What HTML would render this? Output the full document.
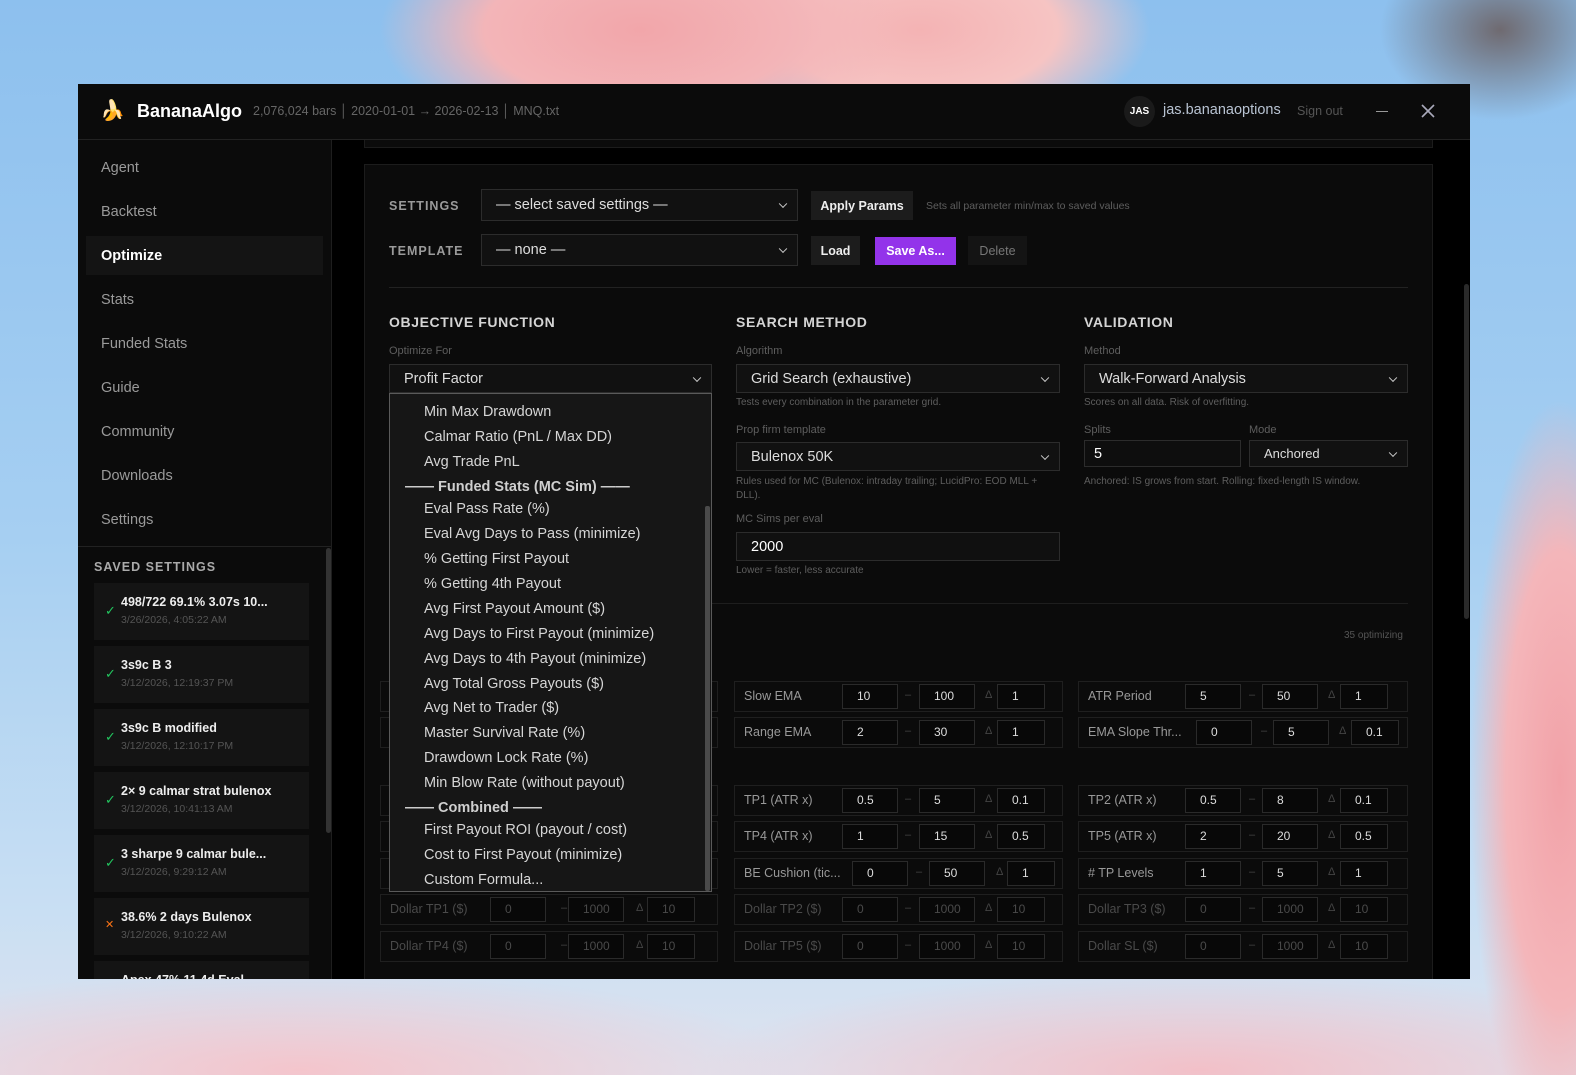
<!DOCTYPE html>
<html><head><meta charset="utf-8"><style>
*{box-sizing:border-box;margin:0;padding:0}
body{width:1576px;height:1075px;overflow:hidden;font-family:"Liberation Sans",sans-serif;position:relative;
background:
radial-gradient(ellipse 260px 120px at 640px 30px,#f2a6aa 0%,#f3b5b8 60%,rgba(243,181,184,0) 100%),
radial-gradient(ellipse 230px 110px at 920px 30px,#f4b3b4 0%,#f6c4c3 60%,rgba(246,196,195,0) 100%),
radial-gradient(ellipse 90px 380px at 1560px 780px,#f2a2a8 0%,#f4b6ba 60%,rgba(244,182,186,0) 100%),
radial-gradient(ellipse 120px 90px at 1500px 30px,#6f6a70 0%,rgba(111,106,112,0) 100%),
radial-gradient(ellipse 500px 100px at 300px 1070px,#f4c5cc 0%,rgba(244,197,204,0) 100%),
radial-gradient(ellipse 500px 100px at 1200px 1070px,#f2c0c8 0%,rgba(242,192,200,0) 100%),
linear-gradient(180deg,#8dc0ee 0%,#a6cff2 50%,#c9dff3 85%,#dfe3ef 100%);}
.win{position:absolute;left:78px;top:84px;width:1392px;height:895px;background:#000;overflow:hidden}
.hdr{position:absolute;left:0;top:0;width:1392px;height:56px;background:#0b0b0b;border-bottom:1px solid #222}
.abs{position:absolute}
.side{position:absolute;left:0;top:56px;width:254px;height:839px;background:#0b0b0b;border-right:1px solid #1e1e1e}
.nav{position:absolute;left:23px;font-size:14.5px;color:#9a9a9a}
.card{position:absolute;left:16px;width:215px;height:57px;background:#141414}
.card .t{position:absolute;left:27px;top:12px;color:#eee;font-size:12.5px;font-weight:bold}
.card .d{position:absolute;left:27px;top:31px;color:#555;font-size:10.5px}
.card .c{position:absolute;left:11px;top:20px;color:#22c55e;font-size:13px}
.lbl{position:absolute;color:#9a9a9a;font-size:12.5px;font-weight:bold;letter-spacing:1px}
.h{position:absolute;color:#d5d5d5;font-size:14px;font-weight:bold;letter-spacing:.6px}
.sm{position:absolute;color:#5e5e5e;font-size:11px}
.sel{position:absolute;background:#111;border:1px solid #2c2c2c;color:#ddd;font-size:14.5px;padding-left:14px;display:flex;align-items:center}
.sel:after{content:"";position:absolute;right:11px;top:50%;width:5px;height:5px;border-right:1.5px solid #ccc;border-bottom:1.5px solid #ccc;transform:translateY(-70%) rotate(45deg)}
.sel.inp:after{display:none}
.btn{position:absolute;font-size:12.5px;font-weight:bold;display:flex;align-items:center;justify-content:center}
.row{position:absolute;height:31px;border:1px solid #1f1f1f}
.row .n{position:absolute;left:9px;top:7px;font-size:12.5px;color:#999;white-space:nowrap}
.row .i{position:absolute;top:2px;height:25px;border:1px solid #2a2a2a;background:#080808;color:#ddd;font-size:12px;padding-left:14px;line-height:23px}
.row .s{position:absolute;top:7px;font-size:11px;color:#444}
.dim .n,.dim .i{color:#4a4a4a}
.dd{position:absolute;left:311px;top:309px;width:323px;height:499px;background:#161616;border:1px solid #5a5a5a;overflow:hidden}
.dd div{position:absolute;left:34px;font-size:14.5px;color:#d6d6d6;white-space:nowrap}
.dd .g{left:15px;font-weight:bold;color:#cfcfcf}
</style></head><body>
<div class="win">
 <div class="hdr">
  <div class="abs" style="left:22px;top:14px;font-size:20px;color:#f6c33a">&#x1F34C;</div>
  <div class="abs" style="left:59px;top:17px;font-size:18px;font-weight:bold;color:#fff">BananaAlgo</div>
  <div class="abs" style="left:175px;top:20px;font-size:12.5px;color:#666">2,076,024 bars │ 2020-01-01 → 2026-02-13 │ MNQ.txt</div>
  <div class="abs" style="left:1046px;top:12px;width:31px;height:31px;border-radius:50%;background:#1a1a1a;color:#fff;font-size:10px;font-weight:bold;text-align:center;line-height:31px">JAS</div>
  <div class="abs" style="left:1085px;top:18px;font-size:14.5px;color:#b8c3d2">jas.bananaoptions</div>
  <div class="abs" style="left:1219px;top:20px;font-size:12.5px;color:#555">Sign out</div>
  <div class="abs" style="left:1298px;top:27px;width:12px;height:1px;background:#999"></div>
  <svg class="abs" style="left:1343px;top:20px" width="14" height="14"><path d="M1 1L13 13M13 1L1 13" stroke="#aab" stroke-width="1.6"/></svg>
 </div>
 <div class="side">
  <div class="nav" style="top:20px">Agent</div>
  <div class="nav" style="top:64px">Backtest</div>
  <div class="abs" style="left:8px;top:96px;width:237px;height:39px;background:#141414"></div>
  <div class="nav" style="top:108px;color:#fff;font-weight:bold">Optimize</div>
  <div class="nav" style="top:152px">Stats</div>
  <div class="nav" style="top:196px">Funded Stats</div>
  <div class="nav" style="top:240px">Guide</div>
  <div class="nav" style="top:284px">Community</div>
  <div class="nav" style="top:328px">Downloads</div>
  <div class="nav" style="top:372px">Settings</div>
  <div class="abs" style="left:0;top:406px;width:253px;height:1px;background:#222"></div>
  <div class="abs" style="left:248px;top:408px;width:5px;height:285px;background:#333;border-radius:3px"></div>
  <div class="lbl" style="left:16px;top:420px;color:#aaa">SAVED SETTINGS</div>
  <div class="card" style="top:443px"><span class="c">✓</span><div class="t">498/722 69.1% 3.07s 10...</div><div class="d">3/26/2026, 4:05:22 AM</div></div>
  <div class="card" style="top:506px"><span class="c">✓</span><div class="t">3s9c B 3</div><div class="d">3/12/2026, 12:19:37 PM</div></div>
  <div class="card" style="top:569px"><span class="c">✓</span><div class="t">3s9c B modified</div><div class="d">3/12/2026, 12:10:17 PM</div></div>
  <div class="card" style="top:632px"><span class="c">✓</span><div class="t">2× 9 calmar strat bulenox</div><div class="d">3/12/2026, 10:41:13 AM</div></div>
  <div class="card" style="top:695px"><span class="c">✓</span><div class="t">3 sharpe 9 calmar bule...</div><div class="d">3/12/2026, 9:29:12 AM</div></div>
  <div class="card" style="top:758px"><span class="c" style="color:#f97316;font-size:11px">✕</span><div class="t">38.6% 2 days Bulenox</div><div class="d">3/12/2026, 9:10:22 AM</div></div>
  <div class="card" style="top:821px"><div class="t">Apex 47% 11.4d Eval</div></div>
 </div>
 <div class="abs" style="left:286px;top:56px;width:1069px;height:8px;background:#0b0b0b;border:1px solid #1c1c1c;border-top:none"></div>
 <div class="abs" style="left:286px;top:80px;width:1069px;height:830px;background:#0b0b0b;border:1px solid #1c1c1c"></div>
 <div class="abs" style="left:1386px;top:200px;width:5px;height:335px;background:#2a2a2a;border-radius:3px"></div>
 <div class="lbl" style="left:311px;top:115px">SETTINGS</div>
 <div class="sel" style="left:403px;top:105px;width:317px;height:32px">— select saved settings —</div>
 <div class="btn" style="left:733px;top:107px;width:102px;height:29px;background:#1c1c1c;color:#eee">Apply Params</div>
 <div class="sm" style="left:848px;top:116px;font-size:10.5px">Sets all parameter min/max to saved values</div>
 <div class="lbl" style="left:311px;top:160px">TEMPLATE</div>
 <div class="sel" style="left:403px;top:150px;width:317px;height:32px">— none —</div>
 <div class="btn" style="left:733px;top:152px;width:49px;height:29px;background:#1c1c1c;color:#eee">Load</div>
 <div class="btn" style="left:797px;top:153px;width:81px;height:28px;background:#9333ea;color:#fff">Save As...</div>
 <div class="btn" style="left:890px;top:152px;width:59px;height:29px;background:#141414;color:#777;font-weight:normal">Delete</div>
 <div class="abs" style="left:311px;top:203px;width:1019px;height:1px;background:#222"></div>

 <div class="h" style="left:311px;top:230px">OBJECTIVE FUNCTION</div>
 <div class="h" style="left:658px;top:230px">SEARCH METHOD</div>
 <div class="h" style="left:1006px;top:230px">VALIDATION</div>
 <div class="sm" style="left:311px;top:261px">Optimize For</div>
 <div class="sel" style="left:311px;top:280px;width:323px;height:29px">Profit Factor</div>
 <div class="sm" style="left:658px;top:261px">Algorithm</div>
 <div class="sel" style="left:658px;top:280px;width:324px;height:29px">Grid Search (exhaustive)</div>
 <div class="sm" style="left:658px;top:313px;font-size:10px">Tests every combination in the parameter grid.</div>
 <div class="sm" style="left:658px;top:340px">Prop firm template</div>
 <div class="sel" style="left:658px;top:358px;width:324px;height:29px">Bulenox 50K</div>
 <div class="sm" style="left:658px;top:391px;font-size:10px;width:324px;line-height:14px">Rules used for MC (Bulenox: intraday trailing; LucidPro: EOD MLL + DLL).</div>
 <div class="sm" style="left:658px;top:429px">MC Sims per eval</div>
 <div class="sel inp" style="left:658px;top:448px;width:324px;height:29px;color:#fff;background:#101010">2000</div>
 <div class="sm" style="left:658px;top:481px;font-size:10px">Lower = faster, less accurate</div>
 <div class="sm" style="left:1006px;top:261px">Method</div>
 <div class="sel" style="left:1006px;top:280px;width:324px;height:29px">Walk-Forward Analysis</div>
 <div class="sm" style="left:1006px;top:313px;font-size:10px">Scores on all data. Risk of overfitting.</div>
 <div class="sm" style="left:1006px;top:340px">Splits</div>
 <div class="sel inp" style="left:1006px;top:356px;width:157px;height:27px;padding-left:9px;color:#fff;background:#0e0e0e">5</div>
 <div class="sm" style="left:1171px;top:340px">Mode</div>
 <div class="sel" style="left:1171px;top:356px;width:159px;height:27px;font-size:13px">Anchored</div>
 <div class="sm" style="left:1006px;top:392px;font-size:10px">Anchored: IS grows from start. Rolling: fixed-length IS window.</div>
 <div class="abs" style="left:311px;top:519px;width:1019px;height:1px;background:#1e1e1e"></div>
 <div class="sm" style="left:1266px;top:546px;font-size:10px;color:#555">35 optimizing</div>

 <div class="row" style="left:302px;top:597px;width:338px"></div>
 <div class="row" style="left:302px;top:633px;width:338px"></div>
 <div class="row" style="left:302px;top:701px;width:338px"></div>
 <div class="row" style="left:302px;top:737px;width:338px"></div>
 <div class="row" style="left:302px;top:774px;width:338px"></div>
 <div class="row dim" style="left:302px;top:810px;width:338px"><div class="n">Dollar TP1 ($)</div><div class="i" style="left:109px;width:56px">0</div><span class="s" style="left:180px">–</span><div class="i" style="left:187px;width:56px">1000</div><span class="s" style="left:255px">Δ</span><div class="i" style="left:266px;width:48px">10</div></div>
 <div class="row dim" style="left:302px;top:847px;width:338px"><div class="n">Dollar TP4 ($)</div><div class="i" style="left:109px;width:56px">0</div><span class="s" style="left:180px">–</span><div class="i" style="left:187px;width:56px">1000</div><span class="s" style="left:255px">Δ</span><div class="i" style="left:266px;width:48px">10</div></div>

 <div class="row" style="left:656px;top:597px;width:329px"><div class="n">Slow EMA</div><div class="i" style="left:107px;width:56px">10</div><span class="s" style="left:170px">–</span><div class="i" style="left:184px;width:56px">100</div><span class="s" style="left:250px">Δ</span><div class="i" style="left:262px;width:48px">1</div></div>
 <div class="row" style="left:656px;top:633px;width:329px"><div class="n">Range EMA</div><div class="i" style="left:107px;width:56px">2</div><span class="s" style="left:170px">–</span><div class="i" style="left:184px;width:56px">30</div><span class="s" style="left:250px">Δ</span><div class="i" style="left:262px;width:48px">1</div></div>
 <div class="row" style="left:656px;top:701px;width:329px"><div class="n">TP1 (ATR x)</div><div class="i" style="left:107px;width:56px">0.5</div><span class="s" style="left:170px">–</span><div class="i" style="left:184px;width:56px">5</div><span class="s" style="left:250px">Δ</span><div class="i" style="left:262px;width:48px">0.1</div></div>
 <div class="row" style="left:656px;top:737px;width:329px"><div class="n">TP4 (ATR x)</div><div class="i" style="left:107px;width:56px">1</div><span class="s" style="left:170px">–</span><div class="i" style="left:184px;width:56px">15</div><span class="s" style="left:250px">Δ</span><div class="i" style="left:262px;width:48px">0.5</div></div>
 <div class="row" style="left:656px;top:774px;width:329px"><div class="n">BE Cushion (tic...</div><div class="i" style="left:117px;width:56px">0</div><span class="s" style="left:181px">–</span><div class="i" style="left:194px;width:56px">50</div><span class="s" style="left:261px">Δ</span><div class="i" style="left:272px;width:48px">1</div></div>
 <div class="row dim" style="left:656px;top:810px;width:329px"><div class="n">Dollar TP2 ($)</div><div class="i" style="left:107px;width:56px">0</div><span class="s" style="left:170px">–</span><div class="i" style="left:184px;width:56px">1000</div><span class="s" style="left:250px">Δ</span><div class="i" style="left:262px;width:48px">10</div></div>
 <div class="row dim" style="left:656px;top:847px;width:329px"><div class="n">Dollar TP5 ($)</div><div class="i" style="left:107px;width:56px">0</div><span class="s" style="left:170px">–</span><div class="i" style="left:184px;width:56px">1000</div><span class="s" style="left:250px">Δ</span><div class="i" style="left:262px;width:48px">10</div></div>

 <div class="row" style="left:1000px;top:597px;width:330px"><div class="n">ATR Period</div><div class="i" style="left:106px;width:56px">5</div><span class="s" style="left:170px">–</span><div class="i" style="left:183px;width:56px">50</div><span class="s" style="left:249px">Δ</span><div class="i" style="left:261px;width:48px">1</div></div>
 <div class="row" style="left:1000px;top:633px;width:330px"><div class="n">EMA Slope Thr...</div><div class="i" style="left:117px;width:56px">0</div><span class="s" style="left:182px">–</span><div class="i" style="left:194px;width:56px">5</div><span class="s" style="left:260px">Δ</span><div class="i" style="left:272px;width:48px">0.1</div></div>
 <div class="row" style="left:1000px;top:701px;width:330px"><div class="n">TP2 (ATR x)</div><div class="i" style="left:106px;width:56px">0.5</div><span class="s" style="left:170px">–</span><div class="i" style="left:183px;width:56px">8</div><span class="s" style="left:249px">Δ</span><div class="i" style="left:261px;width:48px">0.1</div></div>
 <div class="row" style="left:1000px;top:737px;width:330px"><div class="n">TP5 (ATR x)</div><div class="i" style="left:106px;width:56px">2</div><span class="s" style="left:170px">–</span><div class="i" style="left:183px;width:56px">20</div><span class="s" style="left:249px">Δ</span><div class="i" style="left:261px;width:48px">0.5</div></div>
 <div class="row" style="left:1000px;top:774px;width:330px"><div class="n"># TP Levels</div><div class="i" style="left:106px;width:56px">1</div><span class="s" style="left:170px">–</span><div class="i" style="left:183px;width:56px">5</div><span class="s" style="left:249px">Δ</span><div class="i" style="left:261px;width:48px">1</div></div>
 <div class="row dim" style="left:1000px;top:810px;width:330px"><div class="n">Dollar TP3 ($)</div><div class="i" style="left:106px;width:56px">0</div><span class="s" style="left:170px">–</span><div class="i" style="left:183px;width:56px">1000</div><span class="s" style="left:249px">Δ</span><div class="i" style="left:261px;width:48px">10</div></div>
 <div class="row dim" style="left:1000px;top:847px;width:330px"><div class="n">Dollar SL ($)</div><div class="i" style="left:106px;width:56px">0</div><span class="s" style="left:170px">–</span><div class="i" style="left:183px;width:56px">1000</div><span class="s" style="left:249px">Δ</span><div class="i" style="left:261px;width:48px">10</div></div>

 <div class="dd">
  <div style="top:10px">Min Max Drawdown</div>
  <div style="top:35px">Calmar Ratio (PnL / Max DD)</div>
  <div style="top:60px">Avg Trade PnL</div>
  <div class="g" style="top:85px">—— Funded Stats (MC Sim) ——</div>
  <div style="top:107px">Eval Pass Rate (%)</div>
  <div style="top:132px">Eval Avg Days to Pass (minimize)</div>
  <div style="top:157px">% Getting First Payout</div>
  <div style="top:182px">% Getting 4th Payout</div>
  <div style="top:207px">Avg First Payout Amount ($)</div>
  <div style="top:232px">Avg Days to First Payout (minimize)</div>
  <div style="top:257px">Avg Days to 4th Payout (minimize)</div>
  <div style="top:282px">Avg Total Gross Payouts ($)</div>
  <div style="top:306px">Avg Net to Trader ($)</div>
  <div style="top:331px">Master Survival Rate (%)</div>
  <div style="top:356px">Drawdown Lock Rate (%)</div>
  <div style="top:381px">Min Blow Rate (without payout)</div>
  <div class="g" style="top:406px">—— Combined ——</div>
  <div style="top:428px">First Payout ROI (payout / cost)</div>
  <div style="top:453px">Cost to First Payout (minimize)</div>
  <div style="top:478px">Custom Formula...</div>
  <span style="position:absolute;left:315px;top:112px;width:5px;height:385px;background:#4a4a4a;border-radius:2px"></span>
 </div>
</div>
</body></html>
